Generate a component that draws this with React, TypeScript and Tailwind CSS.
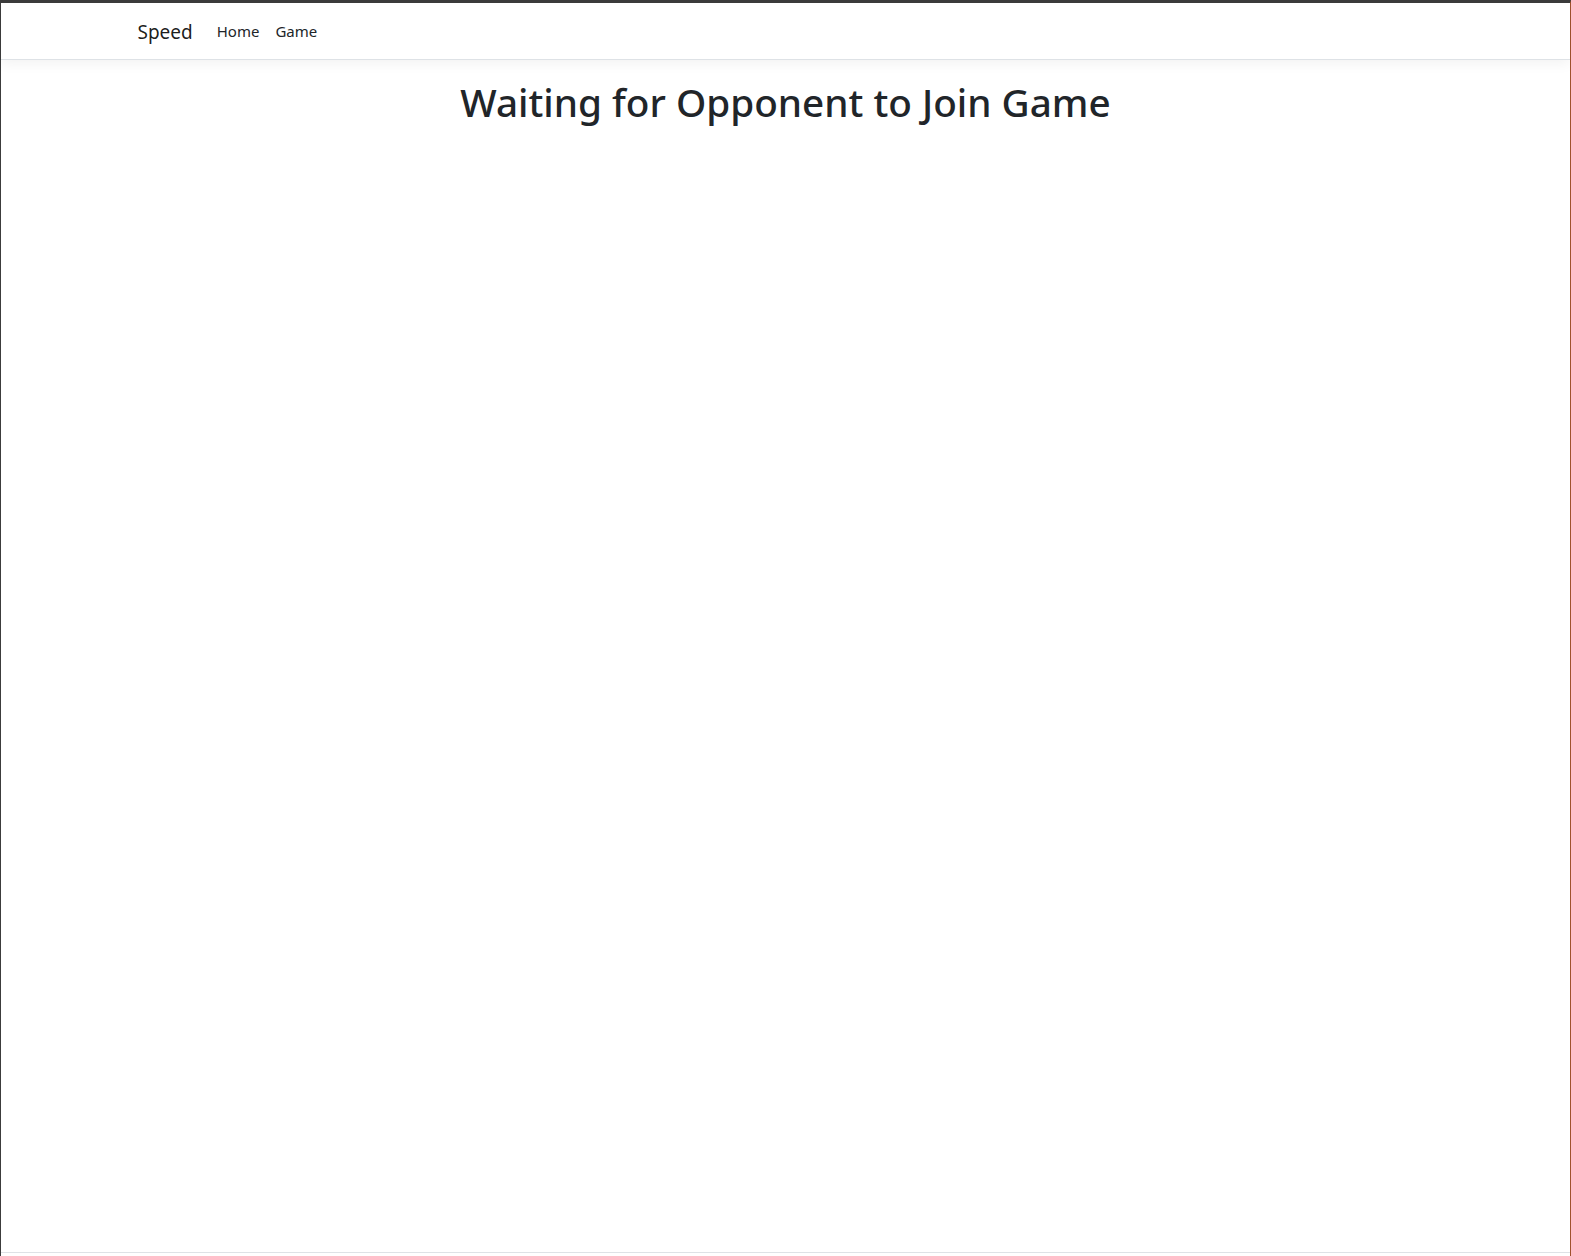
import React from 'react';

const App = () => {
  return (
    <div
      className="h-[1256px] w-full bg-white border-t-[3px] border-t-[#3c3c3c] border-l border-l-[#3c3c3c] border-r border-r-[#a0522d] text-[#212529]"
      style={{ fontFamily: '"Noto Sans", "Open Sans", sans-serif' }}
    >
      <div className="h-[1250px] border-b border-[#dee2e6] flex flex-col">
        <header className="bg-white border-b border-[#dee2e6] shadow-[0_4px_12px_rgba(0,0,0,0.05)] mb-4">
          <nav className="max-w-[1320px] mx-auto px-3 py-2 flex items-center h-[56px]">
            <a className="text-[19px] leading-[30px] text-black/90 mr-4 pt-px">Speed</a>
            <ul className="flex items-center">
              <li className="px-2 text-[15px] leading-6 text-[#212529]">Home</li>
              <li className="px-2 text-[15px] leading-6 text-[#212529]">Game</li>
            </ul>
          </nav>
        </header>
        <main className="flex-grow max-w-[1320px] w-full mx-auto px-3">
          <h1 className="text-center text-[38.7px] leading-[48px] font-medium mt-[2px]">
            Waiting for Opponent to Join Game
          </h1>
        </main>
      </div>
    </div>
  );
};

export default App;
